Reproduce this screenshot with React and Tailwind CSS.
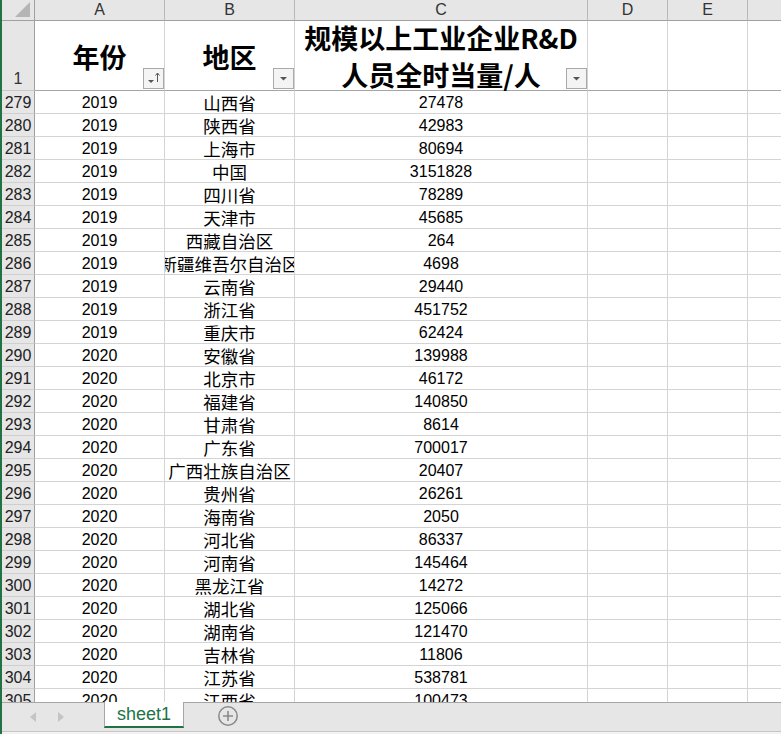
import React from "react";

const rows = [
  [279, 2019, "山西省", 27478],
  [280, 2019, "陕西省", 42983],
  [281, 2019, "上海市", 80694],
  [282, 2019, "中国", 3151828],
  [283, 2019, "四川省", 78289],
  [284, 2019, "天津市", 45685],
  [285, 2019, "西藏自治区", 264],
  [286, 2019, "新疆维吾尔自治区", 4698],
  [287, 2019, "云南省", 29440],
  [288, 2019, "浙江省", 451752],
  [289, 2019, "重庆市", 62424],
  [290, 2020, "安徽省", 139988],
  [291, 2020, "北京市", 46172],
  [292, 2020, "福建省", 140850],
  [293, 2020, "甘肃省", 8614],
  [294, 2020, "广东省", 700017],
  [295, 2020, "广西壮族自治区", 20407],
  [296, 2020, "贵州省", 26261],
  [297, 2020, "海南省", 2050],
  [298, 2020, "河北省", 86337],
  [299, 2020, "河南省", 145464],
  [300, 2020, "黑龙江省", 14272],
  [301, 2020, "湖北省", 125066],
  [302, 2020, "湖南省", 121470],
  [303, 2020, "吉林省", 11806],
  [304, 2020, "江苏省", 538781],
  [305, 2020, "江西省", 100473],
];

function FilterBtn({ sorted }) {
  return (
    <div className="absolute right-[0px] bottom-[1px] w-[21px] h-[21px] border border-[#a9a9a9] bg-[#f4f4f4] flex items-center justify-center">
      {sorted ? (
        <svg width="19" height="19" viewBox="0 0 19 19">
          <path d="M4 11 L10 11 L7 14 Z" fill="#555" />
          <path d="M13.5 4.5 L13.5 13" stroke="#555" strokeWidth="1" />
          <path d="M11.5 6.5 L13.5 4 L15.5 6.5" stroke="#555" strokeWidth="1" fill="none" />
        </svg>
      ) : (
        <svg width="19" height="19" viewBox="0 0 19 19">
          <path d="M6 8 L13 8 L9.5 11.5 Z" fill="#555" />
        </svg>
      )}
    </div>
  );
}

export default function App() {
  const num = "font-['Liberation_Sans','Noto_Sans_CJK_SC',sans-serif] text-[16px] text-black";
  const cjk = "font-['Noto_Sans_CJK_SC',sans-serif] text-[17.5px] text-black";
  return (
    <div className="w-[781px] h-[734px] overflow-hidden flex flex-col border-l-2 border-[#217346] bg-white">
      <div className="h-[702px] overflow-hidden flex flex-col shrink-0">
        {/* column header */}
        <div className="flex h-[21px] shrink-0 bg-[#e6e6e6] font-['Liberation_Sans',sans-serif] text-[16px] text-[#333]">
          <div className="w-[33px] shrink-0 border-r border-b border-[#a0a0a0] relative flex items-end justify-end pr-[4px] pb-[3px]">
            <svg width="15" height="15" viewBox="0 0 15 15">
              <path d="M15 0 L15 15 L0 15 Z" fill="#b5b5b5" />
            </svg>
          </div>
          {[
            ["A", "w-[130px]"],
            ["B", "w-[130px]"],
            ["C", "w-[293px]"],
            ["D", "w-[80px]"],
            ["E", "w-[80px]"],
            ["", "w-[80px]"],
          ].map(([l, w], i) => (
            <div
              key={i}
              className={`${w} shrink-0 border-r border-b border-r-[#b8b8b8] border-b-[#a0a0a0] flex items-center justify-center leading-[20px]`}
            >
              {l}
            </div>
          ))}
        </div>
        {/* row 1 */}
        <div className="flex h-[70px] shrink-0">
          <div className="w-[33px] shrink-0 bg-[#e6e6e6] border-r border-r-[#a0a0a0] border-b border-b-[#c8c8c8] flex items-end justify-center font-['Liberation_Sans',sans-serif] text-[16px] text-[#333] leading-[22px]">
            1
          </div>
          <div className="w-[130px] shrink-0 border-r border-r-[#d4d4d4] border-b border-b-[#a6a6a6] relative flex items-center justify-center pt-[3px] font-['Noto_Sans_CJK_SC',sans-serif] font-bold text-[27px] text-black leading-[36px]">
            年份
            <FilterBtn sorted />
          </div>
          <div className="w-[130px] shrink-0 border-r border-r-[#d4d4d4] border-b border-b-[#a6a6a6] relative flex items-center justify-center pt-[3px] font-['Noto_Sans_CJK_SC',sans-serif] font-bold text-[27px] text-black leading-[36px]">
            地区
            <FilterBtn />
          </div>
          <div className="w-[293px] shrink-0 border-r border-r-[#d4d4d4] border-b border-b-[#a6a6a6] relative flex items-center justify-center pt-[1px] font-['Noto_Sans_CJK_SC',sans-serif] font-bold text-[27px] text-black leading-[37px] text-center whitespace-nowrap">
            <div>
              规模以上工业企业R&amp;D
              <br />
              人员全时当量/人
            </div>
            <FilterBtn />
          </div>
          <div className="w-[80px] shrink-0 border-r border-r-[#d4d4d4] border-b border-b-[#a6a6a6]" />
          <div className="w-[80px] shrink-0 border-r border-r-[#d4d4d4] border-b border-b-[#a6a6a6]" />
          <div className="w-[80px] shrink-0 border-r border-r-[#d4d4d4] border-b border-b-[#a6a6a6]" />
        </div>
        {rows.map(([n, y, r, v]) => (
          <div key={n} className="flex h-[23px] shrink-0">
            <div className="w-[33px] shrink-0 bg-[#e6e6e6] border-r border-r-[#a0a0a0] border-b border-b-[#cfcfcf] flex items-center justify-center pt-[2px] font-['Liberation_Sans',sans-serif] text-[16px] text-[#222] leading-[20px]">
              {n}
            </div>
            <div className={`w-[130px] shrink-0 border-r border-b border-[#d4d4d4] flex items-center justify-center pt-[2px] leading-[20px] ${num}`}>
              {y}
            </div>
            <div className={`w-[130px] shrink-0 border-r border-b border-[#d4d4d4] flex items-center justify-center pt-[1px] overflow-hidden whitespace-nowrap leading-[21px] ${cjk}`}>
              {r}
            </div>
            <div className={`w-[293px] shrink-0 border-r border-b border-[#d4d4d4] flex items-center justify-center pt-[2px] leading-[20px] ${num}`}>
              {v}
            </div>
            <div className="w-[80px] shrink-0 border-r border-b border-[#d4d4d4]" />
            <div className="w-[80px] shrink-0 border-r border-b border-[#d4d4d4]" />
            <div className="w-[80px] shrink-0 border-r border-b border-[#d4d4d4]" />
          </div>
        ))}
      </div>
      {/* tab bar */}
      <div className="h-[29px] shrink-0 bg-[#e6e6e6] border-t border-[#a6a6a6] flex items-stretch">
        <div className="w-[102px] shrink-0 flex items-center gap-[22px] pl-[28px]">
          <svg width="6" height="10" viewBox="0 0 6 10">
            <path d="M6 0 L6 10 L0 5 Z" fill="#c4c4c4" />
          </svg>
          <svg width="6" height="10" viewBox="0 0 6 10">
            <path d="M0 0 L0 10 L6 5 Z" fill="#c4c4c4" />
          </svg>
        </div>
        <div className="w-[80px] shrink-0 h-[26px] -mt-px bg-white border-l border-r border-[#a6a6a6] border-b-2 border-b-[#217346] flex items-center justify-center font-['Liberation_Sans',sans-serif] text-[18px] text-[#217346] leading-[22px] pb-[1px]">
          sheet1
        </div>
        <div className="flex items-center pl-[33px] pb-[2px]">
          <svg width="22" height="22" viewBox="0 0 22 22">
            <circle cx="11" cy="11" r="9.2" fill="none" stroke="#8a8a8a" strokeWidth="1.5" />
            <path d="M11 6 L11 16 M6 11 L16 11" stroke="#8a8a8a" strokeWidth="1.6" />
          </svg>
        </div>
      </div>
      <div className="h-[3px] shrink-0 bg-[#f2f2f2] border-t border-[#c6c6c6]" />
    </div>
  );
}
